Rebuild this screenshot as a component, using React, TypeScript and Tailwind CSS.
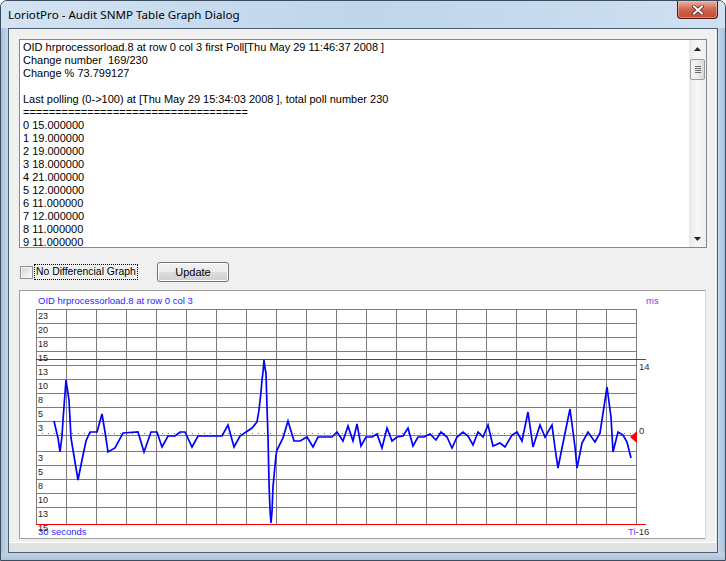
import React from "react";

const lines: string[] = [
  "OID hrprocessorload.8 at row 0 col 3 first Poll[Thu May 29 11:46:37 2008 ]",
  "Change number  169/230",
  "Change % 73.799127",
  "",
  "Last polling (0->100) at [Thu May 29 15:34:03 2008 ], total poll number 230",
  "===================================",
  "0 15.000000",
  "1 19.000000",
  "2 19.000000",
  "3 18.000000",
  "4 21.000000",
  "5 12.000000",
  "6 11.000000",
  "7 12.000000",
  "8 11.000000",
  "9 11.000000",
];

const pts: [number, number][] = [
  [54, 421], [58, 438], [60, 452], [62, 436], [63, 420], [66, 380], [69, 400], [71, 438], [75, 462], [78, 480],
  [82, 460], [86, 441], [90, 432], [97, 432], [102, 414], [105, 432], [108, 452], [115, 448], [123, 433], [138, 432],
  [144, 452], [151, 432], [157, 432], [162, 447], [168, 436], [175, 436], [180, 432], [185, 432], [192, 447], [198, 436],
  [222, 436], [228, 425], [234, 447], [240, 436], [252, 428], [257, 422], [259, 410], [261, 392], [262, 380], [263, 372],
  [264, 360], [265, 368], [266, 373], [267, 407], [268, 437], [269, 482], [270, 510], [271, 523], [272, 512], [273, 487],
  [276, 455], [277, 450], [283, 438], [288, 421], [294, 441], [300, 441], [307, 437], [313, 447], [318, 437], [332, 437],
  [337, 432], [343, 441], [348, 426], [353, 441], [357, 424], [361, 446], [366, 437], [372, 437], [377, 434], [382, 448],
  [387, 428], [392, 441], [397, 437], [403, 436], [408, 428], [413, 446], [418, 437], [424, 437], [430, 434], [436, 440],
  [441, 432], [447, 437], [452, 448], [457, 437], [463, 432], [468, 436], [473, 445], [478, 432], [483, 437], [488, 425],
  [493, 446], [500, 443], [505, 447], [512, 435], [517, 432], [522, 441], [528, 412], [533, 447], [540, 425], [545, 437],
  [552, 425], [555, 448], [558, 468], [563, 443], [570, 409], [575, 447], [577, 468], [582, 443], [588, 432], [595, 442],
  [600, 433], [607, 387], [611, 417], [613, 452], [618, 432], [623, 435], [627, 442], [631, 458],
];

const hLines = [309, 323, 337, 351, 365, 379, 393, 407, 421, 435, 451, 465, 479, 493, 507];
const vLines = Array.from({ length: 21 }, (_, k) => 36 + 30 * k);
const topLabels: [string, number][] = [
  ["23", 309], ["20", 323], ["18", 337], ["15", 351], ["13", 365], ["10", 379], ["8", 393], ["5", 407], ["3", 421],
];
const botLabels: [string, number][] = [["3", 451], ["5", 465], ["8", 479], ["10", 493], ["13", 507]];

function Graph() {
  return (
    <svg width="685" height="247" viewBox="20 291 685 247" className="block font-['Liberation_Sans',Arial,sans-serif]">
      <g shapeRendering="crispEdges" stroke="#7c7c7c" strokeWidth="1">
        {hLines.map((y) => (
          <line key={"h" + y} x1={36} x2={637} y1={y + 0.5} y2={y + 0.5} />
        ))}
        {vLines.map((x) => (
          <line key={"v" + x} x1={x + 0.5} x2={x + 0.5} y1={309} y2={524} />
        ))}
      </g>
      <line x1={36} x2={637} y1={433.5} y2={433.5} stroke="#707070" strokeDasharray="1 5" shapeRendering="crispEdges" />
      <g shapeRendering="crispEdges" stroke="#ff0000" strokeWidth="1">
        <line x1={36} x2={646} y1={359.5} y2={359.5} />
        <line x1={36} x2={646} y1={524.5} y2={524.5} />
      </g>
      <polyline
        points={pts.map((p) => p.join(",")).join(" ")}
        fill="none"
        stroke="#0000ff"
        strokeWidth="1.7"
        strokeLinejoin="miter"
      />
      <polygon points="630,437 637,431 637,443" fill="#ff0000" />
      <g fontSize="9" fill="#1a1a1a">
        {topLabels.map(([t, y]) => (
          <text key={"t" + y} x={38} y={y + 9.5}>{t}</text>
        ))}
        {botLabels.map(([t, y]) => (
          <text key={"b" + y} x={38} y={y + 9.5}>{t}</text>
        ))}
        <text x={38} y={531}>15</text>
      </g>
      <text x={38} y={304} fontSize="9.5" fill="#1f1fff">OID hrprocessorload.8 at row 0 col 3</text>
      <text x={646} y={304} fontSize="9.5" fill="#7a3cf0">ms</text>
      <text x={639} y={369.5} fontSize="9.5" fill="#3a2f1a">14</text>
      <text x={639} y={434} fontSize="9.5" fill="#3a2f1a">0</text>
      <text x={38} y={535} fontSize="9.5" fill="#2a2aff">30 seconds</text>
      <text x={628} y={534.5} fontSize="9.5">
        <tspan fill="#5a4cff">Ti</tspan>
        <tspan fill="#3a2f1a">-16</tspan>
      </text>
    </svg>
  );
}

function ScrollArrow({ up }: { up: boolean }) {
  return (
    <div className="h-[17px] flex items-center justify-center">
      <svg width="7" height="4" viewBox="0 0 7 4">
        {up ? <polygon points="0,4 7,4 3.5,0" fill="#222" /> : <polygon points="0,0 7,0 3.5,4" fill="#222" />}
      </svg>
    </div>
  );
}

function Scrollbar() {
  return (
    <div className="w-[17px] h-full flex flex-col bg-gradient-to-r from-[#e9e9e9] via-[#f7f7f7] to-[#eeeeee]">
      <ScrollArrow up />
      <div className="flex-1 flex flex-col">
        <div className="mt-[2px] mx-px h-[21px] rounded-[2px] border border-[#9b9b9b] bg-gradient-to-r from-[#f5f5f5] via-[#ececec] to-[#d8d8d8] flex flex-col items-center justify-center gap-[1px]">
          <div className="w-[6px] h-px bg-[#6a6a6a]" />
          <div className="w-[6px] h-px bg-[#6a6a6a]" />
          <div className="w-[6px] h-px bg-[#6a6a6a]" />
          <div className="w-[6px] h-px bg-[#6a6a6a]" />
        </div>
      </div>
      <ScrollArrow up={false} />
    </div>
  );
}

function CloseButton() {
  return (
    <div className="w-[41px] h-[18px] rounded-b-[4px] border border-t-0 border-[#4a1a12] bg-gradient-to-b from-[#eab0a2] via-[#cf6650] to-[#c3482f] flex items-center justify-center shadow-[inset_0_0_0_1px_rgba(255,210,200,0.45)]">
      <svg width="12" height="10" viewBox="0 0 12 10">
        <path d="M2 1.5 L10 8.5 M10 1.5 L2 8.5" stroke="#5a2418" strokeWidth="3.6" strokeLinecap="square" />
        <path d="M2 1.5 L10 8.5 M10 1.5 L2 8.5" stroke="#ffffff" strokeWidth="2" strokeLinecap="square" />
      </svg>
    </div>
  );
}

export default function App() {
  return (
    <div className="w-[726px] h-[561px] flex flex-col overflow-hidden rounded-t-[7px] border border-[#3b4c5e] bg-gradient-to-b from-[#c6daee] to-[#b9cfe6]">
      <div className="h-[27px] flex items-start bg-gradient-to-r from-[#d3e3f2] via-[#bed5ec] to-[#cfe0f1]">
        <div className="pl-[7px] pt-[5px] text-[11.6px] leading-[18px] text-black font-['Noto_Sans','Open_Sans',sans-serif]">
          LoriotPro - Audit SNMP Table Graph Dialog
        </div>
        <div className="ml-auto mr-[7px]">
          <CloseButton />
        </div>
      </div>
      <div className="h-[525px] flex">
        <div className="w-[7px] bg-gradient-to-r from-[#a9c2db] to-[#c5d8ec]" />
        <div className="w-[710px] h-full border border-[#4d5f73] bg-[#e2e2e2] font-['Liberation_Sans',Arial,sans-serif]">
          <div className="w-[707px] h-[514px] bg-[#f0f0f0] border-r border-b border-white pl-[10px] pt-[10px] flex flex-col">
            <div className="w-[688px] h-[209px] border border-[#828790] bg-white flex">
              <div className="flex-1 pl-[3px] pt-px text-[11px] text-black overflow-hidden">
                {lines.map((l, i) => (
                  <div key={i} className="h-[13px] leading-[13px] whitespace-pre">
                    {l}
                  </div>
                ))}
              </div>
              <Scrollbar />
            </div>
            <div className="mt-[14px] h-[20px] flex items-center">
              <div className="ml-px w-[13px] h-[13px] border border-[#8e8f8f] bg-gradient-to-br from-[#d4d4d4] to-[#fafafa] shadow-[inset_0_0_0_1px_#f4f4f4]" />
              <div className="ml-px w-[104px] h-[16px] pl-px border border-dotted border-black text-[10.4px] leading-[14px] text-black whitespace-nowrap">
                No Differencial Graph
              </div>
              <div className="ml-[19px] w-[72px] h-[20px] rounded-[3px] border border-[#707070] bg-[linear-gradient(#f2f2f2_0%,#ebebeb_50%,#dddddd_50%,#cfcfcf_100%)] shadow-[inset_0_0_0_1px_#fcfcfc] flex items-center justify-center text-[11px] text-black">
                Update
              </div>
            </div>
            <div className="mt-[8px] w-[687px] h-[249px] border border-[#a0a0a0] border-r-[#d9d9d9] bg-white">
              <Graph />
            </div>
          </div>
        </div>
        <div className="w-[7px] bg-gradient-to-r from-[#c5d8ec] to-[#a9c2db]" />
      </div>
      <div className="h-[7px] bg-gradient-to-b from-[#c3d3e4] to-[#aec4da]" />
    </div>
  );
}
